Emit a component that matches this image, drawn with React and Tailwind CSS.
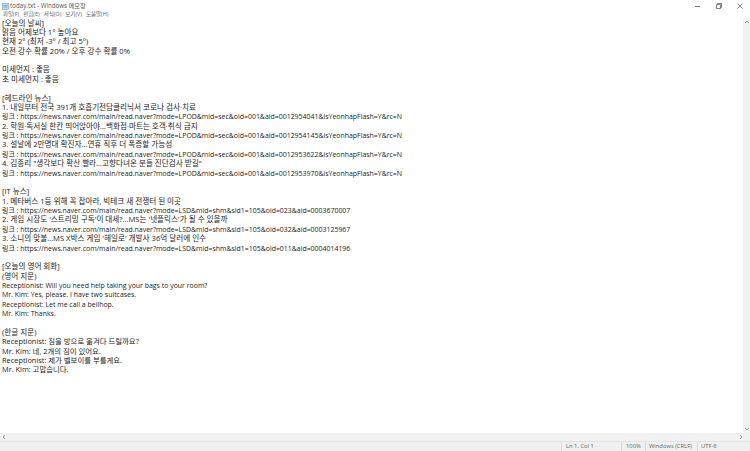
const lines = [
  "[오늘의 날씨]",
  "맑음 어제보다 1° 높아요",
  "현재 2° (최저 -3° / 최고 5°)",
  "오전 강수 확률 20% / 오후 강수 확률 0%",
  "",
  "미세먼지 : 좋음",
  "초 미세먼지 : 좋음",
  "",
  "[헤드라인 뉴스]",
  "1. 내일부터 전국 391개 호흡기전담클리닉서 코로나 검사·치료",
  "링크 : https://news.naver.com/main/read.naver?mode=LPOD&mid=sec&oid=001&aid=0012954041&isYeonhapFlash=Y&rc=N",
  "2. 학원·독서실 한칸 띄어앉아야…백화점·마트는 호객·취식 금지",
  "링크 : https://news.naver.com/main/read.naver?mode=LPOD&mid=sec&oid=001&aid=0012954145&isYeonhapFlash=Y&rc=N",
  "3. 설날에 2만명대 확진자…연휴 직후 더 폭증할 가능성",
  "링크 : https://news.naver.com/main/read.naver?mode=LPOD&mid=sec&oid=001&aid=0012953622&isYeonhapFlash=Y&rc=N",
  "4. 김종리 \"생각보다 확산 빨라…고향다녀온 분들 진단검사 받길\"",
  "링크 : https://news.naver.com/main/read.naver?mode=LPOD&mid=sec&oid=001&aid=0012953970&isYeonhapFlash=Y&rc=N",
  "",
  "[IT 뉴스]",
  "1. 메타버스 1등 위해 꼭 잡아라, 빅테크 새 전쟁터 된 이곳",
  "링크 : https://news.naver.com/main/read.naver?mode=LSD&mid=shm&sid1=105&oid=023&aid=0003670007",
  "2. 게임 시장도 '스트리밍 구독'이 대세?…MS는 '넷플릭스'가 될 수 있을까",
  "링크 : https://news.naver.com/main/read.naver?mode=LSD&mid=shm&sid1=105&oid=032&aid=0003125967",
  "3. 소니의 맞불…MS X박스 게임 '헤일로' 개발사 36억 달러에 인수",
  "링크 : https://news.naver.com/main/read.naver?mode=LSD&mid=shm&sid1=105&oid=011&aid=0004014196",
  "",
  "[오늘의 영어 회화]",
  "(영어 지문)",
  "Receptionist: Will you need help taking your bags to your room?",
  "Mr. Kim: Yes, please. I have two suitcases.",
  "Receptionist: Let me call a bellhop.",
  "Mr. Kim: Thanks.",
  "",
  "(한글 지문)",
  "Receptionist: 짐을 방으로 옮겨다 드릴까요?",
  "Mr. Kim: 네, 2개의 짐이 있어요.",
  "Receptionist: 제가 벨보이를 부를게요.",
  "Mr. Kim: 고맙습니다.",
];

const menus = ["파일(F)", "편집(E)", "서식(O)", "보기(V)", "도움말(H)"];

// Latin in the shot runs narrower than Korean, so the mostly-Latin lines get a smaller size
function lineSize(l) {
  if (l.startsWith("링크") || /^[\x00-\x7f]*$/.test(l)) return "text-[6.95px]";
  if (l.startsWith("Receptionist") || l.startsWith("Mr.")) return "text-[7.4px]";
  return "text-[7.6px]";
}

function Chevron({ d }) {
  return (
    <svg width="6" height="6" viewBox="0 0 6 6" fill="none" stroke="#8a8a8a" strokeWidth="0.8">
      <path d={d} />
    </svg>
  );
}

export default function App() {
  return (
    <div className="w-[750px] h-[451px] bg-white flex flex-col overflow-hidden text-[#1c1c1c] font-['Open_Sans','Noto_Sans_CJK_KR',sans-serif]">
      {/* title bar */}
      <div className="h-[11px] flex items-center shrink-0 relative">
        <svg className="ml-[2px] mt-[1px]" width="7" height="7" viewBox="0 0 7 7">
          <rect x="0.5" y="0.5" width="6" height="6" fill="#bcdcf2" stroke="#6f9fc4" strokeWidth="0.6" />
          <path d="M1.5 2.5h4M1.5 4h4" stroke="#4d7fa5" strokeWidth="0.5" />
        </svg>
        <span className="ml-[1px] mt-[1px] text-[6.2px] leading-none text-[#555]">today.txt - Windows 메모장</span>
        <div className="ml-auto flex items-center mt-[1px]">
          <div className="w-[21px] flex justify-center">
            <div className="w-[5px] h-px bg-[#777]" />
          </div>
          <div className="w-[21px] flex justify-center">
            <svg width="6" height="6" viewBox="0 0 6 6" fill="none" stroke="#666" strokeWidth="0.8">
              <path d="M0.5 1.5h4v4h-4zM1.5 1.5v-1h4v4h-1" />
            </svg>
          </div>
          <div className="w-[21px] flex justify-center">
            <svg width="6" height="6" viewBox="0 0 6 6" fill="none" stroke="#666" strokeWidth="0.8">
              <path d="M0.5 0.5l5 5M5.5 0.5l-5 5" />
            </svg>
          </div>
        </div>
      </div>

      {/* menu */}
      <div className="h-[7px] pt-[1px] flex items-center gap-[4px] pl-[3px] shrink-0 text-[5.5px] leading-none text-[#666]">
        {menus.map(m => <span key={m}>{m}</span>)}
      </div>

      {/* editor */}
      <div className="flex-1 min-h-0 flex">
        <div className="flex-1 min-w-0 overflow-hidden pl-[2px] pt-[0.5px] leading-[9.38px] whitespace-pre">
          {lines.map((l, i) => <div key={i} className={`h-[9.38px] ${lineSize(l)}`}>{l}</div>)}
        </div>
        <div className="w-[7px] bg-[#f1f1f1] flex flex-col items-center justify-between py-[1px] shrink-0">
          <Chevron d="M1 4l2-2 2 2" />
          <Chevron d="M1 2l2 2 2-2" />
        </div>
      </div>

      {/* horizontal scrollbar */}
      <div className="h-[8px] bg-[#f1f1f1] flex items-center justify-between px-[1px] shrink-0">
        <Chevron d="M4 1L2 3l2 2" />
        <div className="mr-[5px]"><Chevron d="M2 1l2 2-2 2" /></div>
      </div>

      {/* status bar */}
      <div className="h-[10px] bg-[#f0f0f0] border-t border-[#e2e2e2] flex justify-end shrink-0 text-[5.8px] leading-[9px] text-[#666]">
        <div className="w-[60px] border-l border-[#dcdcdc] pl-[4px]">Ln 1, Col 1</div>
        <div className="w-[24px] border-l border-[#dcdcdc] pl-[4px]">100%</div>
        <div className="w-[52px] border-l border-[#dcdcdc] pl-[3px]">Windows (CRLF)</div>
        <div className="w-[53px] border-l border-[#dcdcdc] pl-[3px]">UTF-8</div>
      </div>
    </div>
  );
}
